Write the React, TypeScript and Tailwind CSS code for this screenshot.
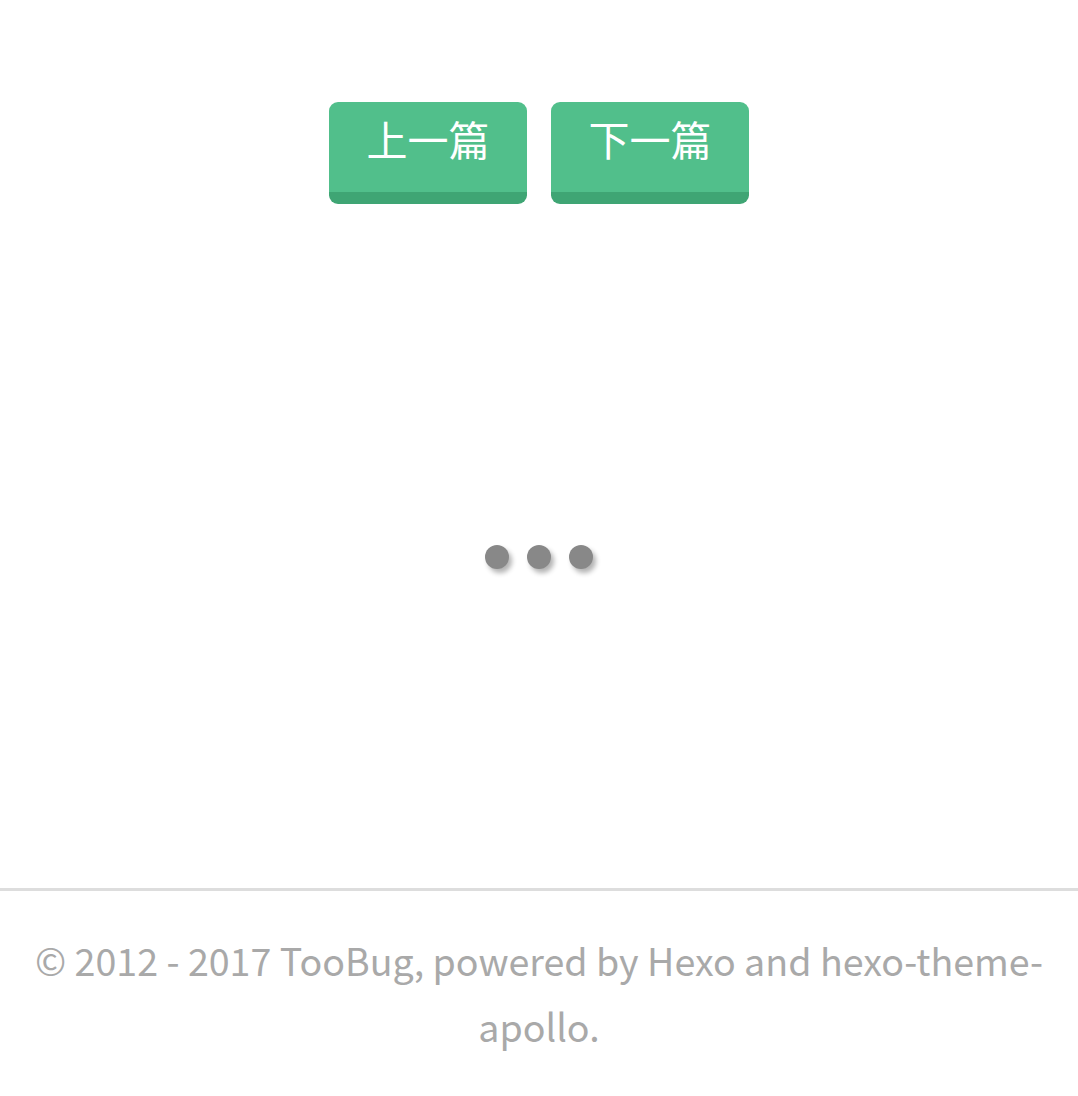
import React from "react";

const font = { fontFamily: '"Noto Sans CJK SC", "Noto Sans", sans-serif' };

function NavButton({ label }: { label: string }) {
  return (
    <a
      href="#"
      className="flex h-[102px] w-[198px] items-start justify-center rounded-[9px] border-b-[12px] border-[#3fa574] bg-[#51bf8b] pt-[9px] text-[41px] leading-[54px] text-white"
    >
      {label}
    </a>
  );
}

export default function App() {
  return (
    <div className="flex min-h-[1096px] flex-col bg-white" style={font}>
      {/* prev / next */}
      <div className="flex justify-center gap-[24px] pt-[102px]">
        <NavButton label="上一篇" />
        <NavButton label="下一篇" />
      </div>

      {/* loading dots */}
      <div className="mt-[341px] flex justify-center gap-[18px]">
        <span className="h-[24px] w-[24px] rounded-full bg-[#888888] shadow-[3px_4px_5px_rgba(0,0,0,0.3)]" />
        <span className="h-[24px] w-[24px] rounded-full bg-[#888888] shadow-[3px_4px_5px_rgba(0,0,0,0.3)]" />
        <span className="h-[24px] w-[24px] rounded-full bg-[#888888] shadow-[3px_4px_5px_rgba(0,0,0,0.3)]" />
      </div>

      {/* footer */}
      <footer className="mt-[319px] border-t-[3px] border-[#dddddd] px-[20px] pt-[36px] text-center text-[37.6px] leading-[66px] text-[#a9a9a9]">
        © 2012 - 2017 TooBug, powered by Hexo and hexo-theme-apollo.
      </footer>
    </div>
  );
}
